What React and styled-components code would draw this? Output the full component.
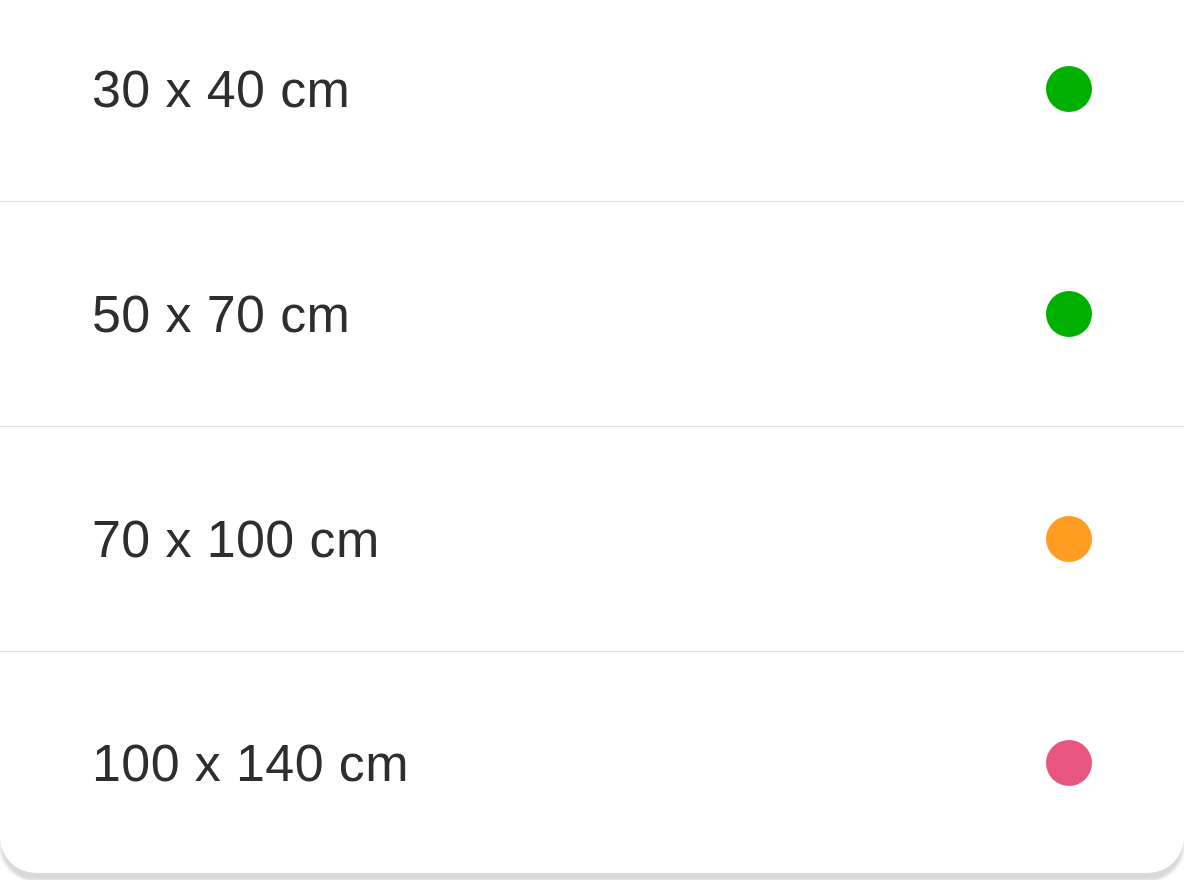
import React from "react";
import styled, { createGlobalStyle } from "styled-components";

const Global = createGlobalStyle`
  html, body { margin: 0; padding: 0; background: #ffffff; overflow: hidden; }
  body { font-family: "Liberation Sans", Arial, sans-serif; }
`;

const Page = styled.div`
  width: 1184px;
  height: 880px;
  overflow: hidden;
  background: #ffffff;
`;

const Card = styled.ul`
  list-style: none;
  margin: -23px 0 0 0;
  padding: 0;
  background: #ffffff;
  border-radius: 0 0 36px 36px;
  box-shadow: 0 8px 3px rgba(0, 0, 0, 0.15);
  overflow: hidden;
`;

const Row = styled.li`
  height: 225px;
  display: flex;
  align-items: center;
  justify-content: space-between;
  padding: 0 92px 0 92px;
  box-sizing: border-box;
  border-bottom: 1px solid #dedede;
  &:last-child {
    border-bottom: none;
    height: 221px;
  }
`;

const Label = styled.span`
  font-family: "Liberation Sans", Arial, sans-serif;
  font-size: 52px;
  letter-spacing: 0.4px;
  color: #2e2e2e;
`;

const Dot = styled.span`
  width: 46px;
  height: 46px;
  border-radius: 50%;
  background: ${(p) => p.$color};
`;

const sizes = [
  { label: "30 x 40 cm", color: "#00b000" },
  { label: "50 x 70 cm", color: "#00b000" },
  { label: "70 x 100 cm", color: "#ff9d22" },
  { label: "100 x 140 cm", color: "#e8557e" },
];

export default function App() {
  return (
    <Page>
      <Global />
      <Card>
        {sizes.map((s) => (
          <Row key={s.label}>
            <Label>{s.label}</Label>
            <Dot $color={s.color} />
          </Row>
        ))}
      </Card>
    </Page>
  );
}
